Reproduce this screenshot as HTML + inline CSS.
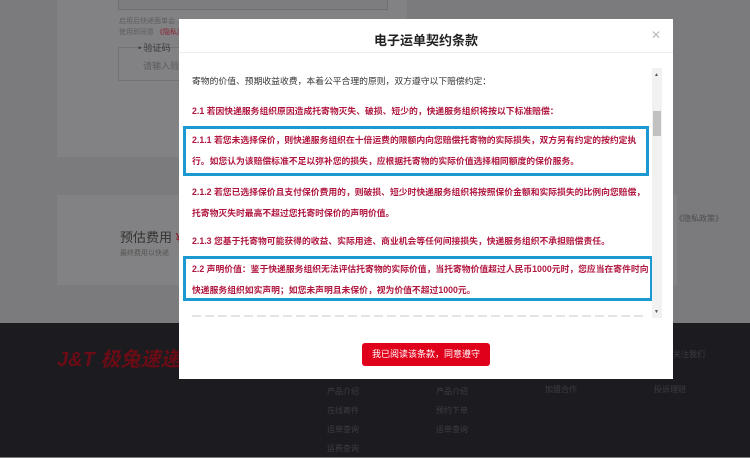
<!DOCTYPE html>
<html><head><meta charset="utf-8"><style>
*{margin:0;padding:0;box-sizing:border-box}
body{width:750px;height:457px;overflow:hidden;background:#7b7a7c;position:relative;font-family:"Liberation Sans","Noto Sans CJK SC",sans-serif}
.abs{position:absolute}
.card{background:#828183}
.foot{left:0;top:323px;width:750px;height:134px;background:#1c1b1f}
.ft{color:#3e3d41;font-size:8px}
.modal{left:179px;top:19px;width:494px;height:360px;background:#fff}
.title{left:0;top:11px;width:494px;text-align:center;font-size:13px;font-weight:bold;color:#222}
.hr{left:0;top:33px;width:494px;height:1px;background:#ececec}
.x{left:472px;top:9px;color:#bbb;font-size:12px}
.p{left:13px;font-size:8.8px;color:#333;white-space:nowrap}
.r{color:#b0163e;font-weight:bold;font-size:8.8px;line-height:21px;white-space:nowrap}
.box{border:3px solid #1a9ad0;left:4px;width:466px}
.sb{left:473px;top:49px;width:10px;height:250px;background:#f1f1f1}
.th{left:474px;top:92px;width:8px;height:25px;background:#c1c1c1}
.btn{left:183px;top:324px;width:128px;height:23px;background:#e0001b;border-radius:3px;color:#fff;font-size:9px;text-align:center;line-height:23px}
</style></head><body>
<div class="abs card" style="left:57px;top:0;width:350px;height:157px"></div>
<div class="abs" style="left:118px;top:0;width:270px;height:10px;background:#7d7c7e;border:1px solid #6e6d70;border-top:none"></div>
<div class="abs ft" style="left:119px;top:16px;color:#5f5e61;font-size:7px;line-height:11px">启用后快递面单会...<br>使用即同意 <span style="color:#8a2030">《隐私》</span></div>
<div class="abs" style="left:118px;top:47px;width:80px;height:34px;border:1px solid #737275"></div>
<div class="abs" style="left:138px;top:41px;font-size:9px;color:#3c3b3e">• 验证码</div>
<div class="abs" style="left:143px;top:59px;font-size:9px;color:#5c5b5e">请输入验</div>
<div class="abs card" style="left:57px;top:195px;width:620px;height:90px"></div>
<div class="abs" style="left:120px;top:227px;font-size:13px;color:#333">预估费用 <span style="color:#8a1020">¥</span></div>
<div class="abs" style="left:120px;top:248px;font-size:7px;color:#555">最终费用以快递</div>
<div class="abs" style="left:675px;top:213px;font-size:8px;color:#4d4c4f">《隐私政策》</div>
<div class="abs foot"></div>
<div class="abs" style="left:57px;top:343px;color:#6a0c15;font-size:20px;font-weight:bold;font-style:italic">J&amp;T 极兔速递</div>
<div class="abs ft" style="left:327px;top:382px;line-height:19px">产品介绍<br>在线寄件<br>运单查询<br>运费查询</div>
<div class="abs ft" style="left:436px;top:382px;line-height:19px">产品介绍<br>预约下单<br>运单查询</div>
<div class="abs ft" style="left:545px;top:384px">加盟合作</div>
<div class="abs ft" style="left:654px;top:384px">投诉理赔</div>
<div class="abs ft" style="left:673px;top:349px">关注我们</div>
<div class="abs modal">
<div class="abs title">电子运单契约条款</div>
<div class="abs x">✕</div>
<div class="abs hr"></div>
<div class="abs p" style="top:55px">寄物的价值、预期收益收费，本着公平合理的原则，双方遵守以下赔偿约定：</div>
<div class="abs p r" style="top:82px">2.1 若因快递服务组织原因造成托寄物灭失、破损、短少的，快递服务组织将按以下标准赔偿：</div>
<div class="abs box" style="top:107px;height:50px"></div>
<div class="abs p r" style="top:111px">2.1.1 若您未选择保价，则快递服务组织在十倍运费的限额内向您赔偿托寄物的实际损失，双方另有约定的按约定执<br>行。如您认为该赔偿标准不足以弥补您的损失，应根据托寄物的实际价值选择相同额度的保价服务。</div>
<div class="abs p r" style="top:163px">2.1.2 若您已选择保价且支付保价费用的，则破损、短少时快递服务组织将按照保价金额和实际损失的比例向您赔偿，<br>托寄物灭失时最高不超过您托寄时保价的声明价值。</div>
<div class="abs p r" style="top:212px">2.1.3 您基于托寄物可能获得的收益、实际用途、商业机会等任何间接损失，快递服务组织不承担赔偿责任。</div>
<div class="abs box" style="top:237px;height:45px;width:470px"></div>
<div class="abs p r" style="top:240px">2.2 声明价值：鉴于快递服务组织无法评估托寄物的实际价值，当托寄物价值超过人民币1000元时，您应当在寄件时向<br>快递服务组织如实声明；如您未声明且未保价，视为价值不超过1000元。</div>
<div class="abs" style="left:13px;top:296px;width:455px;height:2px;background:repeating-linear-gradient(90deg,#e4e4e4 0 9px,#fff 9px 13px)"></div>
<div class="abs sb"></div>
<div class="abs th"></div>
<div class="abs" style="left:475px;top:53px;font-size:5px;color:#555">▲</div>
<div class="abs" style="left:475px;top:290px;font-size:5px;color:#555">▼</div>
<div class="abs btn">我已阅读该条款，同意遵守</div>
</div>
</body></html>
